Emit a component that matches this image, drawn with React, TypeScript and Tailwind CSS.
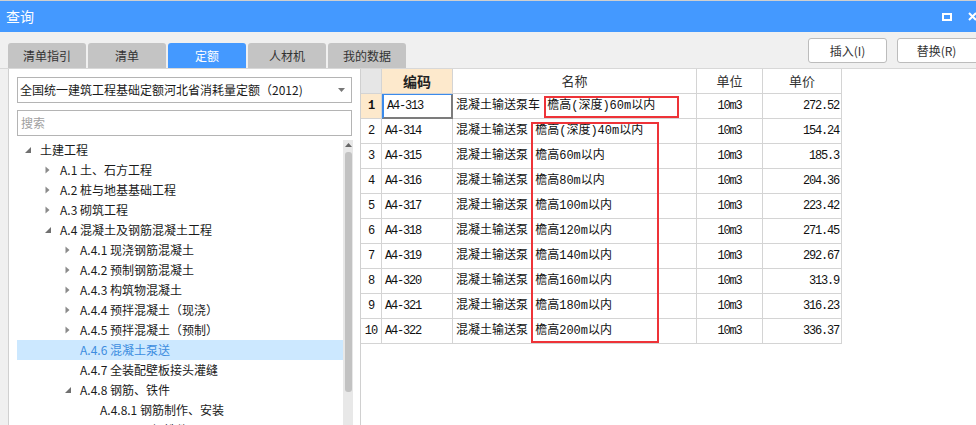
import React from "react";

const tabs = ["清单指引", "清单", "定额", "人材机", "我的数据"];

type Node = { label: string; level: number; caret?: "open" | "closed"; selected?: boolean };

const tree: Node[] = [
  { label: "土建工程", level: 0, caret: "open" },
  { label: "A.1 土、石方工程", level: 1, caret: "closed" },
  { label: "A.2 桩与地基基础工程", level: 1, caret: "closed" },
  { label: "A.3 砌筑工程", level: 1, caret: "closed" },
  { label: "A.4 混凝土及钢筋混凝土工程", level: 1, caret: "open" },
  { label: "A.4.1 现浇钢筋混凝土", level: 2, caret: "closed" },
  { label: "A.4.2 预制钢筋混凝土", level: 2, caret: "closed" },
  { label: "A.4.3 构筑物混凝土", level: 2, caret: "closed" },
  { label: "A.4.4 预拌混凝土（现浇）", level: 2, caret: "closed" },
  { label: "A.4.5 预拌混凝土（预制）", level: 2, caret: "closed" },
  { label: "A.4.6 混凝土泵送", level: 2, selected: true },
  { label: "A.4.7 全装配壁板接头灌缝", level: 2 },
  { label: "A.4.8 钢筋、铁件", level: 2, caret: "open" },
  { label: "A.4.8.1 钢筋制作、安装", level: 3 },
  { label: "A.4.8.2 预埋铁件", level: 3 },
];

const rows = [
  ["A4-313", "混凝土输送泵车 檐高(深度)60m以内", "272.52"],
  ["A4-314", "混凝土输送泵 檐高(深度)40m以内", "154.24"],
  ["A4-315", "混凝土输送泵 檐高60m以内", "185.3"],
  ["A4-316", "混凝土输送泵 檐高80m以内", "204.36"],
  ["A4-317", "混凝土输送泵 檐高100m以内", "223.42"],
  ["A4-318", "混凝土输送泵 檐高120m以内", "271.45"],
  ["A4-319", "混凝土输送泵 檐高140m以内", "292.67"],
  ["A4-320", "混凝土输送泵 檐高160m以内", "313.9"],
  ["A4-321", "混凝土输送泵 檐高180m以内", "316.23"],
  ["A4-322", "混凝土输送泵 檐高200m以内", "336.37"],
];

const ui = { fontFamily: '"Noto Sans CJK SC", "Noto Sans", sans-serif' };
const grid = { fontFamily: '"Liberation Mono", "Noto Sans CJK SC", monospace' };

function Caret({ kind }: { kind?: "open" | "closed" }) {
  if (kind === "closed")
    return (
      <svg width="5" height="8" viewBox="0 0 5 8">
        <path d="M0.5 0.5 L4.5 4 L0.5 7.5 Z" fill="#8a8a8a" />
      </svg>
    );
  if (kind === "open")
    return (
      <svg width="6" height="6" viewBox="0 0 6 6">
        <path d="M6 0 L6 6 L0 6 Z" fill="#707070" />
      </svg>
    );
  return null;
}

export default function App() {
  return (
    <div className="w-[976px] h-[425px] overflow-hidden bg-[#f0f0f0] flex flex-col" style={ui}>
      <div className="h-px bg-[#cfcfcf]" />
      <div className="h-[31px] bg-[#4499ff] flex items-center pl-[6px] text-white text-[14px]">
        <span>查询</span>
        <div className="ml-auto flex items-center gap-[16px]">
          <div className="w-[10px] h-[8px] border-2 border-white" />
          <svg width="9" height="9" viewBox="0 0 9 9" className="-mr-[1px]">
            <path d="M1 1 L8 8 M8 1 L1 8" stroke="white" strokeWidth="2" />
          </svg>
        </div>
      </div>

      <div className="h-[36px] flex items-end pl-[8px] relative">
        <div className="flex gap-[2px]">
          {tabs.map((t) => (
            <div
              key={t}
              className={`w-[78px] h-[25px] rounded-t-[3px] flex items-center justify-center text-[12px] ${
                t === "定额" ? "bg-[#4499ff] text-white" : "bg-[#c4c4c4] text-[#333]"
              }`}
            >
              {t}
            </div>
          ))}
        </div>
        <div className="ml-auto self-start mt-[6px] flex gap-[10px] -mr-[10px]">
          <button className="w-[79px] h-[25px] bg-white border border-[#bcbcbc] rounded-[3px] text-[12px] text-[#333]">
            插入(I)
          </button>
          <button className="w-[89px] h-[25px] bg-white border border-[#bcbcbc] rounded-[3px] text-[12px] text-[#333] pr-[10px]">
            替换(R)
          </button>
        </div>
      </div>

      <div className="flex-1 flex min-h-0 border-t border-[#d8d8d8]">
        <div className="w-[352px] ml-[8px] bg-white border-l border-[#d0d0d0] flex flex-col pl-[8px] pt-[8px] min-h-0">
          <div className="w-[335px] h-[26px] border border-[#b4b4b4] flex items-center pl-[2px] text-[12px] text-[#1a1a1a]">
            <span className="flex-1">全国统一建筑工程基础定额河北省消耗量定额（2012)</span>
            <svg width="7" height="4" viewBox="0 0 7 4" className="mr-[6px]">
              <path d="M0 0 L7 0 L3.5 4 Z" fill="#777" />
            </svg>
          </div>
          <div className="w-[335px] h-[26px] mt-[7px] border border-[#b4b4b4] flex items-center pl-[3px] text-[12px] text-[#a0a0a0]">
            搜索
          </div>
          <div className="flex mt-[4px] flex-1 min-h-0 overflow-hidden">
            <div className="w-[326px] flex flex-col">
              {tree.map((n) => (
                <div
                  key={n.label}
                  className={`h-[20px] shrink-0 flex items-center text-[12px] ${
                    n.selected ? "bg-[#cce8ff] text-[#3d8de0]" : "text-[#1a1a1a]"
                  }`}
                  style={{ paddingLeft: n.level * 20 }}
                >
                  <div className="w-[23px] pl-[8px] flex items-center">
                    <Caret kind={n.caret} />
                  </div>
                  <span className="whitespace-nowrap">{n.label}</span>
                </div>
              ))}
            </div>
            <div className="w-[10px] bg-[#e8e8e8] flex flex-col items-center">
              <svg width="7" height="4" viewBox="0 0 7 4" className="mt-[3px]">
                <path d="M0 4 L7 4 L3.5 0 Z" fill="#666" />
              </svg>
              <div className="w-[7px] h-[240px] mt-[5px] bg-[#c2c2c2] rounded-[3px]" />
            </div>
          </div>
        </div>

        <div className="flex-1 bg-white border-l border-[#d0d0d0] relative text-[12px] text-[#111]">
          <div className="grid grid-cols-[21px_71px_244px_66px_79px] w-[481px]">
            <div className="h-[25px] bg-[#e6e6e6] border-r border-b border-[#d4d4d4]" />
            <div className="h-[25px] bg-[#fde9cc] border-r border-b border-[#d4d4d4] flex items-center justify-center text-[14px] font-bold text-[#222]" style={ui}>
              编码
            </div>
            <div className="h-[25px] border-r border-b border-[#d4d4d4] flex items-center justify-center text-[13px] text-[#333]" style={ui}>
              名称
            </div>
            <div className="h-[25px] border-r border-b border-[#d4d4d4] flex items-center justify-center text-[13px] text-[#333]" style={ui}>
              单位
            </div>
            <div className="h-[25px] border-r border-b border-[#d4d4d4] flex items-center justify-center text-[13px] text-[#333]" style={ui}>
              单价
            </div>

            {rows.map(([code, name, price], i) => (
              <React.Fragment key={code}>
                <div
                  className={`h-[25px] border-r border-b border-[#d4d4d4] flex items-center justify-center tracking-[-1px] ${
                    i === 0 ? "bg-[#fde9cc] font-bold" : ""
                  }`}
                  style={grid}
                >
                  {i + 1}
                </div>
                <div
                  className={`h-[25px] flex items-center pl-[3px] tracking-[-1.2px] ${
                    i === 0
                      ? "border-l-2 border-l-[#3b8beb] border-t border-t-[#3b8beb] border-r-2 border-r-[#7c7c7c] border-b-2 border-b-[#7c7c7c] pl-[1px]"
                      : "border-r border-b border-[#d4d4d4]"
                  }`}
                  style={grid}
                >
                  {code}
                </div>
                <div className="h-[25px] border-r border-b border-[#d4d4d4] flex items-center pl-[3px] whitespace-nowrap" style={grid}>
                  {name}
                </div>
                <div className="h-[25px] border-r border-b border-[#d4d4d4] flex items-center justify-center tracking-[-1.2px]" style={grid}>
                  10m3
                </div>
                <div className="h-[25px] border-r border-b border-[#d4d4d4] flex items-center justify-end pr-[2px] tracking-[-1.2px]" style={grid}>
                  {price}
                </div>
              </React.Fragment>
            ))}
          </div>

          <div className="absolute left-[183px] top-[27px] w-[135px] h-[22px] border-2 border-[#ee3338]" />
          <div className="absolute left-[170px] top-[53px] w-[128px] h-[221px] border-2 border-[#ee3338]" />
        </div>
      </div>
    </div>
  );
}
